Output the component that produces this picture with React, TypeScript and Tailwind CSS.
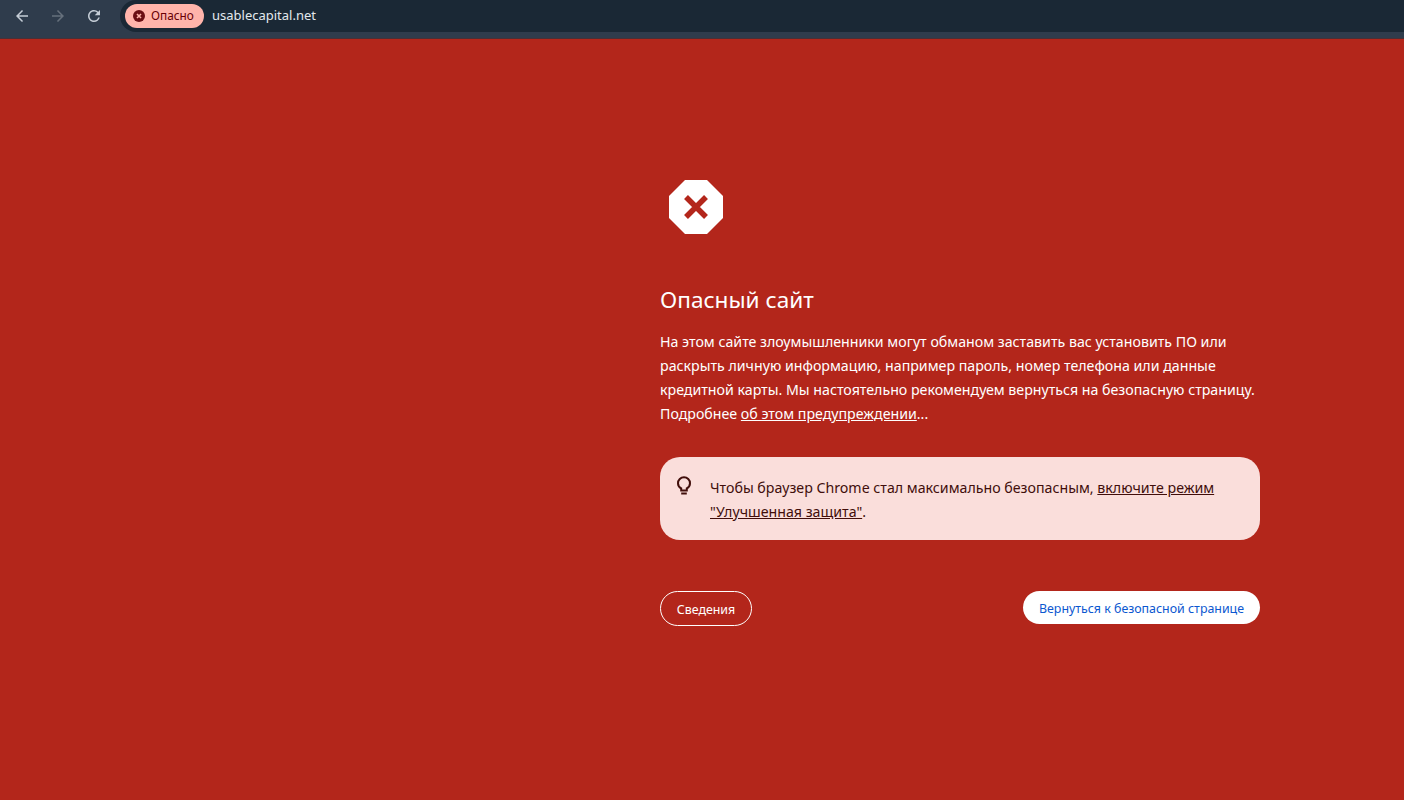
const font = { fontFamily: '"Noto Sans", sans-serif' }

function NavIcon({ d, className }: { d: string; className: string }) {
  return (
    <svg width="18" height="18" viewBox="0 0 24 24" fill="currentColor" className={className}>
      <path d={d} />
    </svg>
  )
}

function DangerIcon() {
  return (
    <svg width="12" height="12" viewBox="0 0 12 12" className="shrink-0">
      <circle cx="6" cy="6" r="6" fill="#6b0f14" />
      <path d="M4 4l4 4M8 4l-4 4" stroke="#ffb4ab" strokeWidth="1.6" />
    </svg>
  )
}

function StopIcon() {
  return (
    <svg width="54" height="54" viewBox="0 0 54 54">
      <polygon points="16,0 38,0 54,16 54,38 38,54 16,54 0,38 0,16" fill="#fff" />
      <path d="M17 17l20 20M37 17L17 37" stroke="#b3261b" strokeWidth="5.5" />
    </svg>
  )
}

function BulbIcon() {
  return (
    <svg width="14" height="20" viewBox="0 0 14 20" fill="none" stroke="currentColor" strokeWidth="2" className="shrink-0">
      <path d="M4.2 14.5V12.4C2.4 11.4 1 9.4 1 7.2A6 6 0 0 1 13 7.2C13 9.4 11.6 11.4 9.8 12.4V14.5Z" />
      <path d="M4.2 17.5h5.6" />
    </svg>
  )
}

export default function App() {
  return (
    <div className="h-[800px] w-[1404px] overflow-hidden bg-[#b3261b] text-white" style={font}>
      {/* browser toolbar */}
      <div className="h-[39px] bg-[#2f3c4c] border-b border-[#4a3036]">
        <div className="flex h-[32px] items-center">
          <div className="flex w-[120px] items-center pl-[13px] gap-[18px]">
            <NavIcon d="M20 11H7.83l5.59-5.59L12 4l-8 8 8 8 1.41-1.41L7.83 13H20v-2z" className="text-[#c5cdd6]" />
            <NavIcon d="M12 4l-1.41 1.41L16.17 11H4v2h12.17l-5.58 5.59L12 20l8-8z" className="text-[#66707c]" />
            <NavIcon d="M17.65 6.35A7.958 7.958 0 0 0 12 4c-4.42 0-7.99 3.58-7.99 8s3.57 8 7.99 8c3.73 0 6.84-2.55 7.73-6h-2.08A5.99 5.99 0 0 1 12 18c-3.31 0-6-2.69-6-6s2.69-6 6-6c1.66 0 3.14.69 4.22 1.78L13 11h7V4l-2.35 2.35z" className="text-[#c5cdd6]" />
          </div>
          <div className="flex h-[32px] flex-1 items-center rounded-l-full bg-[#1a2835] pl-[5px]">
            <div className="flex h-[24px] w-[79px] items-center gap-[6px] rounded-full bg-[#ffb4ab] pl-[8px] text-[11.8px] text-[#690005]">
              <DangerIcon />
              <span>Опасно</span>
            </div>
            <span className="ml-[8px] text-[13px] text-[#e3e8ee]">usablecapital.net</span>
          </div>
        </div>
      </div>

      {/* interstitial */}
      <div className="ml-[660px] w-[600px] pt-[141px]">
        <div className="pl-[9px]">
          <StopIcon />
        </div>
        <h1 className="mt-[50px] text-[22.6px] leading-[32px] font-normal">Опасный сайт</h1>
        <p className="mt-[14px] text-[14.2px] leading-[24px]">
          На этом сайте злоумышленники могут обманом заставить вас установить ПО или раскрыть личную информацию, например пароль, номер телефона или данные кредитной карты. Мы настоятельно рекомендуем вернуться на безопасную страницу. Подробнее <span className="underline">об этом предупреждении</span>...
        </p>
        <div className="mt-[31px] flex h-[83px] rounded-[20px] bg-[#fadedb] pl-[17px] pt-[19px] pr-[40px] text-[#410e0b]">
          <BulbIcon />
          <p className="ml-[19px] text-[14.2px] leading-[24px]">
            Чтобы браузер Chrome стал максимально безопасным, <span className="underline">включите режим "Улучшенная защита"</span>.
          </p>
        </div>
        <div className="mt-[51px] flex items-start justify-between">
          <button className="h-[35px] w-[92px] rounded-full border border-white pt-[4px] text-[12.4px]">Сведения</button>
          <button className="h-[33px] w-[237px] rounded-full bg-white pt-[4px] text-[12.4px] text-[#0b57d0]">Вернуться к безопасной странице</button>
        </div>
      </div>
    </div>
  )
}
